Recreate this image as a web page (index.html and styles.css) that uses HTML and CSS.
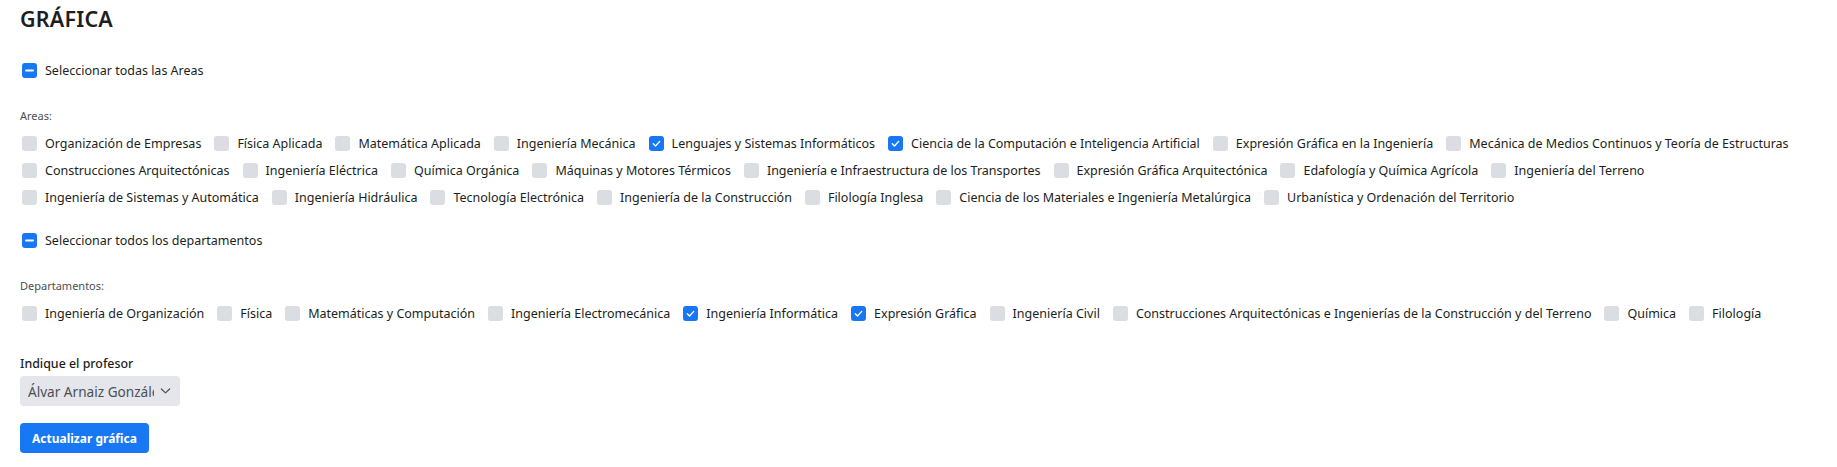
FILE: index.html
```html
<!DOCTYPE html>
<html lang="es">
<head>
<meta charset="utf-8">
<title>Gráfica</title>
<link rel="stylesheet" href="styles.css">
</head>
<body>
<main class="page">
  <h1 class="title">GRÁFICA</h1>

  <label class="check select-all">
    <span class="box on"><svg viewBox="0 0 15 15"><path d="M4 7.5h7" stroke="#fff" stroke-width="2" stroke-linecap="round"/></svg></span>
    <span>Seleccionar todas las Areas</span>
  </label>

  <div class="group-label">Areas:</div>
  <div class="checks">
    <label class="check"><span class="box"></span><span>Organización de Empresas</span></label>
    <label class="check"><span class="box"></span><span>Física Aplicada</span></label>
    <label class="check"><span class="box"></span><span>Matemática Aplicada</span></label>
    <label class="check"><span class="box"></span><span>Ingeniería Mecánica</span></label>
    <label class="check"><span class="box on"><svg viewBox="0 0 15 15"><path d="M4.3 7.8l2.2 2.2 4.2-4.6" fill="none" stroke="#fff" stroke-width="1.4" stroke-linecap="round" stroke-linejoin="round"/></svg></span><span>Lenguajes y Sistemas Informáticos</span></label>
    <label class="check"><span class="box on"><svg viewBox="0 0 15 15"><path d="M4.3 7.8l2.2 2.2 4.2-4.6" fill="none" stroke="#fff" stroke-width="1.4" stroke-linecap="round" stroke-linejoin="round"/></svg></span><span>Ciencia de la Computación e Inteligencia Artificial</span></label>
    <label class="check"><span class="box"></span><span>Expresión Gráfica en la Ingeniería</span></label>
    <label class="check"><span class="box"></span><span>Mecánica de Medios Continuos y Teoría de Estructuras</span></label>
    <label class="check"><span class="box"></span><span>Construcciones Arquitectónicas</span></label>
    <label class="check"><span class="box"></span><span>Ingeniería Eléctrica</span></label>
    <label class="check"><span class="box"></span><span>Química Orgánica</span></label>
    <label class="check"><span class="box"></span><span>Máquinas y Motores Térmicos</span></label>
    <label class="check"><span class="box"></span><span>Ingeniería e Infraestructura de los Transportes</span></label>
    <label class="check"><span class="box"></span><span>Expresión Gráfica Arquitectónica</span></label>
    <label class="check"><span class="box"></span><span>Edafología y Química Agrícola</span></label>
    <label class="check"><span class="box"></span><span>Ingeniería del Terreno</span></label>
    <label class="check"><span class="box"></span><span>Ingeniería de Sistemas y Automática</span></label>
    <label class="check"><span class="box"></span><span>Ingeniería Hidráulica</span></label>
    <label class="check"><span class="box"></span><span>Tecnología Electrónica</span></label>
    <label class="check"><span class="box"></span><span>Ingeniería de la Construcción</span></label>
    <label class="check"><span class="box"></span><span>Filología Inglesa</span></label>
    <label class="check"><span class="box"></span><span>Ciencia de los Materiales e Ingeniería Metalúrgica</span></label>
    <label class="check"><span class="box"></span><span>Urbanística y Ordenación del Territorio</span></label>
  </div>

  <label class="check select-all select-dep">
    <span class="box on"><svg viewBox="0 0 15 15"><path d="M4 7.5h7" stroke="#fff" stroke-width="2" stroke-linecap="round"/></svg></span>
    <span>Seleccionar todos los departamentos</span>
  </label>

  <div class="group-label">Departamentos:</div>
  <div class="checks">
    <label class="check"><span class="box"></span><span>Ingeniería de Organización</span></label>
    <label class="check"><span class="box"></span><span>Física</span></label>
    <label class="check"><span class="box"></span><span>Matemáticas y Computación</span></label>
    <label class="check"><span class="box"></span><span>Ingeniería Electromecánica</span></label>
    <label class="check"><span class="box on"><svg viewBox="0 0 15 15"><path d="M4.3 7.8l2.2 2.2 4.2-4.6" fill="none" stroke="#fff" stroke-width="1.4" stroke-linecap="round" stroke-linejoin="round"/></svg></span><span>Ingeniería Informática</span></label>
    <label class="check"><span class="box on"><svg viewBox="0 0 15 15"><path d="M4.3 7.8l2.2 2.2 4.2-4.6" fill="none" stroke="#fff" stroke-width="1.4" stroke-linecap="round" stroke-linejoin="round"/></svg></span><span>Expresión Gráfica</span></label>
    <label class="check"><span class="box"></span><span>Ingeniería Civil</span></label>
    <label class="check"><span class="box"></span><span>Construcciones Arquitectónicas e Ingenierías de la Construcción y del Terreno</span></label>
    <label class="check"><span class="box"></span><span>Química</span></label>
    <label class="check"><span class="box"></span><span>Filología</span></label>
  </div>

  <div class="field-label">Indique el profesor</div>
  <div class="select">
    <span class="select-text">Álvar Arnaiz González</span>
    <svg class="chev" viewBox="0 0 12 8"><path d="M1.5 1.8l4.5 4.2 4.5-4.2" fill="none" stroke="#4b4f56" stroke-width="1.3" stroke-linecap="round" stroke-linejoin="round"/></svg>
  </div>

  <button class="btn">Actualizar gráfica</button>
</main>
</body>
</html>
```

FILE: styles.css
```css
* { box-sizing: border-box; }
body {
  margin: 0;
  background: #fff;
  font-family: "Noto Sans", "Open Sans", sans-serif;
  color: #1c1e21;
}
.page {
  padding: 6px 20px 0;
}
.title {
  margin: 0;
  font-size: 21.5px;
  line-height: 25px;
  font-weight: 600;
  color: #1c1e21;
  letter-spacing: 0.2px;
}
.check {
  display: inline-flex;
  align-items: center;
  gap: 8px;
  height: 20px;
  font-size: 12.5px;
  color: #1c1e21;
  white-space: nowrap;
}
.box {
  width: 15px;
  height: 15px;
  margin-left: 2px;
  border-radius: 3px;
  background: #dadde1;
  flex: none;
  display: flex;
}
.box.on { background: #1877f2; }
.box svg { width: 15px; height: 15px; }
.select-all {
  display: flex;
  margin-top: 29px;
}
.select-dep { margin-top: 23px; }
.group-label {
  margin-top: 28px;
  font-size: 11px;
  line-height: 16px;
  color: #4b4f56;
}
.checks {
  margin-top: 9px;
  display: flex;
  flex-wrap: wrap;
  column-gap: 11px;
  row-gap: 7px;
}
.field-label {
  margin-top: 31px;
  font-size: 12.4px;
  line-height: 20px;
  font-weight: 500;
  color: #1c1e21;
}
.select {
  margin-top: 2px;
  width: 160px;
  height: 30px;
  border-radius: 4px;
  background: #e4e6eb;
  display: flex;
  align-items: center;
  padding: 0 9px 0 8px;
  gap: 6px;
}
.select-text {
  flex: 1;
  overflow: hidden;
  white-space: nowrap;
  font-size: 13.6px;
  color: #4b4f56;
}
.chev { width: 11px; height: 8px; flex: none; }
.btn {
  display: block;
  margin-top: 17px;
  height: 30px;
  padding: 0 12px;
  border: 0;
  border-radius: 4px;
  background: #1877f2;
  color: #fff;
  font-family: "Noto Sans", "Open Sans", sans-serif;
  font-size: 12px;
  font-weight: 700;
}
```
